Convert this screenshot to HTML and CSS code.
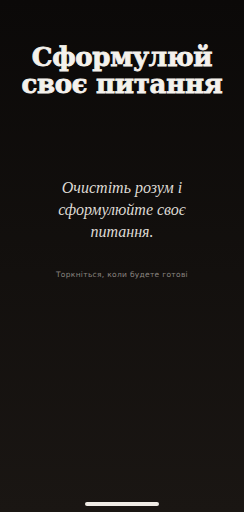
FILE: index.html
```html
<!DOCTYPE html>
<html lang="uk">
<head>
    <meta charset="UTF-8">
    <meta name="viewport" content="width=device-width, initial-scale=1.0">
    <title>Сформулюй своє питання</title>
    <link rel="stylesheet" href="styles.css">
</head>
<body>
    <div class="screen">
        <h1 class="title">Сформулюй<br>своє питання</h1>
        <p class="prompt">Очистіть розум і<br>сформулюйте своє<br>питання.</p>
        <p class="hint">Торкніться, коли будете готові</p>
        <div class="home-bar"></div>
    </div>
</body>
</html>
```

FILE: styles.css
```css
html, body {
    margin: 0;
    padding: 0;
}

body {
    background: linear-gradient(to bottom, #0b0908, #1a1613);
    height: 512px;
    overflow: hidden;
}

.screen {
    display: flex;
    flex-direction: column;
    align-items: center;
    height: 512px;
    color: #f4f1ec;
}

.title {
    margin: 44px 0 0;
    font-family: "DejaVu Serif", serif;
    font-weight: bold;
    font-size: 26px;
    line-height: 27px;
    text-align: center;
    -webkit-text-stroke: 0.8px #f4f1ec;
    letter-spacing: -0.3px;
}

.prompt {
    margin: 79px 0 0;
    font-family: "Liberation Serif", serif;
    font-style: italic;
    font-size: 16px;
    line-height: 22px;
    text-align: center;
    color: #dedad4;
}

.hint {
    margin: 27px 0 0;
    font-family: "DejaVu Sans", sans-serif;
    font-size: 7.5px;
    letter-spacing: 0.3px;
    color: #8a8580;
}

.home-bar {
    margin-top: auto;
    margin-bottom: 6px;
    width: 74px;
    height: 4px;
    border-radius: 2px;
    background: #f0ece6;
}
```
